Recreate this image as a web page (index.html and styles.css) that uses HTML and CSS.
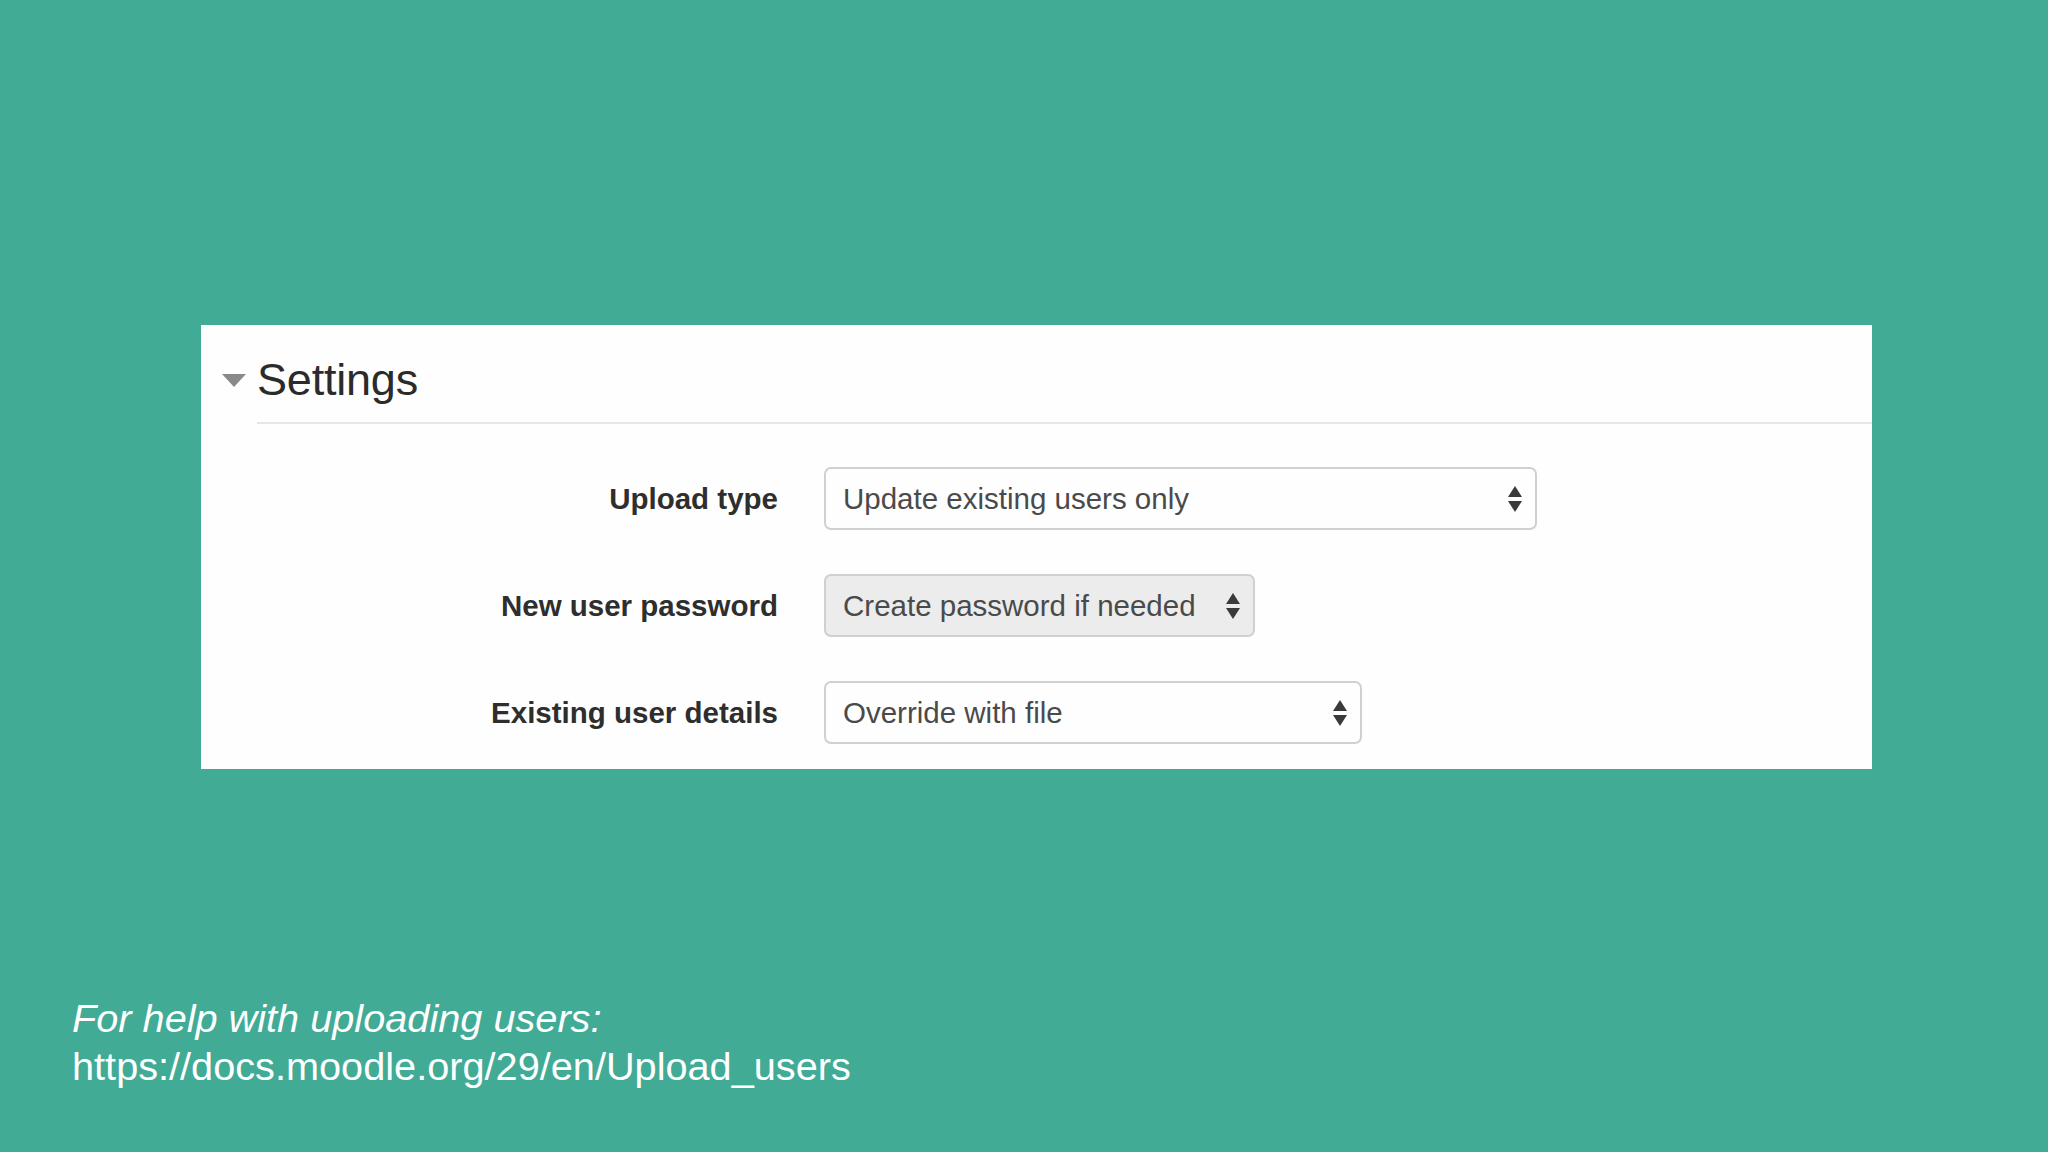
FILE: index.html
```html
<!DOCTYPE html>
<html lang="en">
<head>
  <meta charset="UTF-8">
  <meta name="viewport" content="width=device-width, initial-scale=1.0">
  <title>Upload users - Settings</title>
  <link rel="stylesheet" href="styles.css">
</head>
<body>
  <div class="slide">
    <div class="panel">
      <div class="legend">
        <span class="caret"></span>
        <h2>Settings</h2>
      </div>
      <div class="rows">
        <div class="row">
          <label>Upload type</label>
          <div class="select wide">
            <span>Update existing users only</span>
            <span class="arrows"><i class="up"></i><i class="down"></i></span>
          </div>
        </div>
        <div class="row">
          <label>New user password</label>
          <div class="select narrow disabled">
            <span>Create password if needed</span>
            <span class="arrows"><i class="up"></i><i class="down"></i></span>
          </div>
        </div>
        <div class="row">
          <label>Existing user details</label>
          <div class="select mid">
            <span>Override with file</span>
            <span class="arrows"><i class="up"></i><i class="down"></i></span>
          </div>
        </div>
      </div>
    </div>

    <div class="help">
      <p class="note">For help with uploading users:</p>
      <p class="link">https://docs.moodle.org/29/en/Upload_users</p>
    </div>
  </div>
</body>
</html>
```

FILE: styles.css
```css
html, body {
  margin: 0;
  height: 100%;
}

body {
  background: #41ab96;
  font-family: 'Liberation Sans', Arial, sans-serif;
  overflow: hidden;
}

.slide {
  width: 2048px;
  height: 1152px;
  display: flex;
  flex-direction: column;
}

.panel {
  margin: 325px 0 0 201px;
  width: 1671px;
  height: 444px;
  background: #fefefe;
  box-sizing: border-box;
}

.legend {
  display: flex;
  align-items: center;
  height: 97px;
  padding: 12px 0 0 21px;
  box-sizing: border-box;
}

.caret {
  width: 0;
  height: 0;
  border-left: 12px solid transparent;
  border-right: 12px solid transparent;
  border-top: 13px solid #8a8a8a;
  margin-top: 2px;
  margin-right: 11px;
}

.legend h2 {
  margin: 0;
  font-weight: normal;
  font-size: 45px;
  color: #2b2b2b;
  letter-spacing: -0.2px;
}

.rows {
  margin-left: 56px;
  border-top: 2px solid #e6e6e6;
  padding-top: 43px;
  display: flex;
  flex-direction: column;
  gap: 44px;
}

.row {
  display: flex;
  align-items: center;
}

.row label {
  width: 521px;
  text-align: right;
  font-weight: bold;
  font-size: 29.5px;
  color: #2e2e2e;
  margin-right: 46px;
}

.select {
  height: 63px;
  box-sizing: border-box;
  border: 2px solid #d0d0d0;
  border-radius: 7px;
  background: #fefefe;
  display: flex;
  align-items: center;
  justify-content: space-between;
  padding: 0 13px 0 17px;
  font-size: 29.5px;
  color: #4a4a4a;
}

.select.wide { width: 713px; }
.select.narrow { width: 431px; }
.select.mid { width: 538px; }

.select.disabled {
  background: #ececec;
}

.arrows {
  display: flex;
  flex-direction: column;
  gap: 4px;
}

.arrows i {
  width: 0;
  height: 0;
  border-left: 7px solid transparent;
  border-right: 7px solid transparent;
}

.arrows .up { border-bottom: 11px solid #3a3a3a; }
.arrows .down { border-top: 11px solid #3a3a3a; }

.help {
  margin: 225px 0 0 72px;
  color: #ffffff;
  font-size: 39.7px;
  line-height: 48px;
}

.help p {
  margin: 0;
}

.help .note {
  font-style: italic;
}
```
